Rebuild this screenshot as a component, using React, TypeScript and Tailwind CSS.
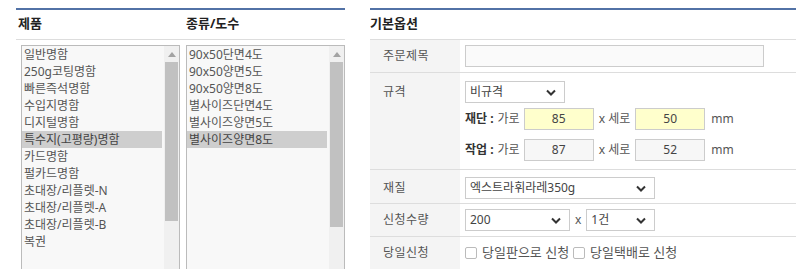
import React from "react";

const products = [
  "일반명함",
  "250g코팅명함",
  "빠른즉석명함",
  "수입지명함",
  "디지털명함",
  "특수지(고평량)명함",
  "카드명함",
  "펄카드명함",
  "초대장/리플렛-N",
  "초대장/리플렛-A",
  "초대장/리플렛-B",
  "복권",
  "",
  "스티커",
];

const kinds = [
  "90x50단면4도",
  "90x50양면5도",
  "90x50양면8도",
  "별사이즈단면4도",
  "별사이즈양면5도",
  "별사이즈양면8도",
];

function ListBox({
  items,
  selected,
  thumb,
}: {
  items: string[];
  selected: number;
  thumb: string;
}) {
  return (
    <div className="flex h-[240px] w-[159px] border border-[#bbb] bg-[#f8f8f8]">
      <ul className="flex-1 overflow-hidden pr-[2px]">
        {items.map((t, i) => (
          <li
            key={i}
            className={
              "h-[17px] truncate pl-[2px] leading-[17px] " +
              (i === selected ? "bg-[#cecece] text-[#444]" : "text-[#555]")
            }
          >
            {t}
          </li>
        ))}
      </ul>
      <div className="flex w-[15px] flex-col items-center bg-[#f0f0f0]">
        <div className="flex h-[16px] items-center justify-center">
          <svg width="8" height="5" viewBox="0 0 8 5">
            <path d="M0 5 L4 0 L8 5 Z" fill="#a3a3a3" />
          </svg>
        </div>
        <div className={"w-[13px] bg-[#c1c1c1] " + thumb} />
      </div>
    </div>
  );
}

function Chevron() {
  return (
    <svg width="10" height="7" viewBox="0 0 10 7" className="shrink-0">
      <path d="M1 1.5 L5 5.5 L9 1.5" fill="none" stroke="#333" strokeWidth="2" />
    </svg>
  );
}

function Select({ value, w }: { value: string; w: string }) {
  return (
    <div
      className={
        "flex h-[22px] items-center justify-between border border-[#ccc] bg-white pl-[4px] pr-[8px] text-[#444] " +
        w
      }
    >
      <span className="leading-[20px]">{value}</span>
      <Chevron />
    </div>
  );
}

function Box({ value, yellow }: { value: string; yellow?: boolean }) {
  return (
    <div
      className={
        "flex h-[22px] w-[70px] items-center justify-center border border-[#ccc] text-[#444] " +
        (yellow ? "bg-[#ffffcc]" : "bg-[#f7f7f7]")
      }
    >
      {value}
    </div>
  );
}

function Row({
  label,
  children,
  pad,
}: {
  label: string;
  children: React.ReactNode;
  pad: string;
}) {
  return (
    <div className="flex border-b border-[#ddd]">
      <div className={"w-[90px] shrink-0 bg-[#f4f4f4] pl-[13px] leading-[22px] tracking-[0.5px] text-[#555] " + pad}>
        {label}
      </div>
      <div className={"flex-1 pl-[5px] " + pad}>{children}</div>
    </div>
  );
}

function Check({ label }: { label: string }) {
  return (
    <label className="flex items-center gap-[5px] text-[13px] text-[#555]">
      <span className="h-[12px] w-[12px] rounded-[2px] border border-[#bbb] bg-white" />
      <span>{label}</span>
    </label>
  );
}

export default function App() {
  return (
    <div className="flex h-[269px] w-[809px] overflow-hidden bg-white pt-[8px] font-['Noto_Sans','Noto_Sans_CJK_KR',sans-serif] text-[12px]">
      <section className="ml-[16px] w-[329px] shrink-0">
        <div className="flex h-[32px] border-t-2 border-b border-[#dddddd] border-t-[#5272a6] pt-[3px] text-[13px] font-bold leading-[20px] text-[#222]">
          <div className="w-[170px] pl-[2px]">제품</div>
          <div>종류/도수</div>
        </div>
        <div className="mt-[5px] flex gap-[6px] pl-[5px]">
          <ListBox items={products} selected={5} thumb="h-[159px]" />
          <ListBox items={kinds} selected={5} thumb="h-[165px]" />
        </div>
      </section>

      <section className="ml-[25px] w-[426px] shrink-0">
        <div className="h-[32px] border-t-2 border-b border-[#dddddd] border-t-[#5272a6] pt-[3px] text-[13px] font-bold leading-[20px] text-[#222]">
          기본옵션
        </div>

        <Row label="주문제목" pad="py-[5px]">
          <div className="h-[22px] w-[299px] border border-[#ccc] bg-[#fafafa]" />
        </Row>

        <Row label="규격" pad="pt-[8px] pb-[8px]">
          <Select value="비규격" w="w-[100px]" />
          <div className="mt-[5px] flex items-center text-[#555]">
            <b className="mr-[4px] text-[#333]">재단 :</b>
            <span className="mr-[4px]">가로</span>
            <Box value="85" yellow />
            <span className="mx-[5px]">x 세로</span>
            <Box value="50" yellow />
            <span className="ml-[6px]">mm</span>
          </div>
          <div className="mt-[9px] flex items-center text-[#555]">
            <b className="mr-[4px] text-[#333]">작업 :</b>
            <span className="mr-[4px]">가로</span>
            <Box value="87" />
            <span className="mx-[5px]">x 세로</span>
            <Box value="52" />
            <span className="ml-[6px]">mm</span>
          </div>
        </Row>

        <Row label="재질" pad="pt-[7px] pb-[4px]">
          <Select value="엑스트라휘라레350g" w="w-[190px]" />
        </Row>

        <Row label="신청수량" pad="py-[5px]">
          <div className="flex items-center">
            <Select value="200" w="w-[105px]" />
            <span className="mx-[5px] text-[#555]">x</span>
            <Select value="1건" w="w-[69px]" />
          </div>
        </Row>

        <Row label="당일신청" pad="py-[5px]">
          <div className="flex h-[22px] items-center gap-[4px]">
            <Check label="당일판으로 신청" />
            <Check label="당일택배로 신청" />
          </div>
        </Row>
      </section>
    </div>
  );
}
